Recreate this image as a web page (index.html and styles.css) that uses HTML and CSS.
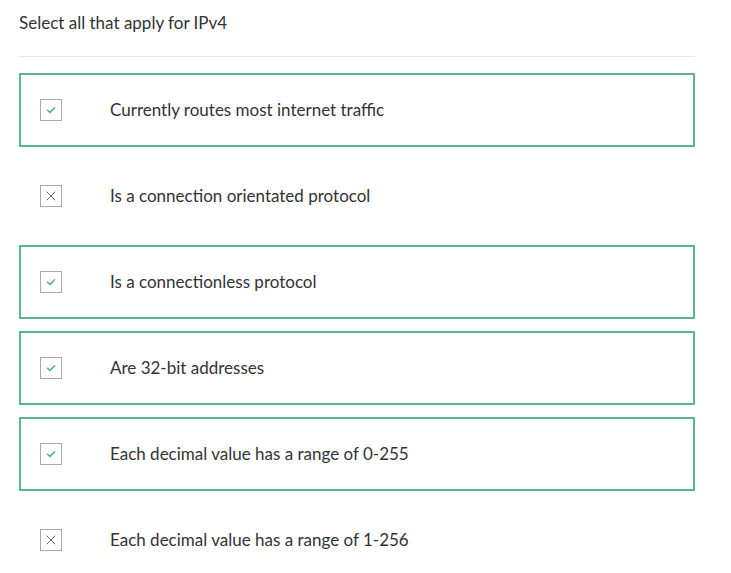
FILE: index.html
```html
<!DOCTYPE html>
<html lang="en">

<head>
    <meta charset="UTF-8">
    <meta name="viewport" content="width=device-width, initial-scale=1.0">
    <title>IPv4</title>

    <link rel="stylesheet" href="styles.css">
</head>

<body>
    <div id="quiz">
        <h2 class="pergunta">Select all that apply for IPv4</h2>

        <div class="opcoes">
            <div class="opcao certa">
                <span class="caixa"><svg width="10" height="8" viewBox="0 0 10 8"><path d="M1.5 4.2 L4 6.4 L8.6 1.8" /></svg></span>
                <span class="texto">Currently routes most internet traffic</span>
            </div>

            <div class="opcao">
                <span class="caixa"><svg class="xis" width="10" height="10" viewBox="0 0 10 10"><path d="M1 1 L9 9 M9 1 L1 9" /></svg></span>
                <span class="texto">Is a connection orientated protocol</span>
            </div>

            <div class="opcao certa">
                <span class="caixa"><svg width="10" height="8" viewBox="0 0 10 8"><path d="M1.5 4.2 L4 6.4 L8.6 1.8" /></svg></span>
                <span class="texto">Is a connectionless protocol</span>
            </div>

            <div class="opcao certa">
                <span class="caixa"><svg width="10" height="8" viewBox="0 0 10 8"><path d="M1.5 4.2 L4 6.4 L8.6 1.8" /></svg></span>
                <span class="texto">Are 32-bit addresses</span>
            </div>

            <div class="opcao certa">
                <span class="caixa"><svg width="10" height="8" viewBox="0 0 10 8"><path d="M1.5 4.2 L4 6.4 L8.6 1.8" /></svg></span>
                <span class="texto">Each decimal value has a range of 0-255</span>
            </div>

            <div class="opcao">
                <span class="caixa"><svg class="xis" width="10" height="10" viewBox="0 0 10 10"><path d="M1 1 L9 9 M9 1 L1 9" /></svg></span>
                <span class="texto">Each decimal value has a range of 1-256</span>
            </div>
        </div>
    </div>
</body>

</html>
```

FILE: styles.css
```css
* {
    padding: 0;
    margin: 0;
    box-sizing: border-box;
}

body {
    background-color: white;
    font-family: Lato, 'Open Sans', sans-serif;
    color: #333;
}

#quiz {
    width: 695px;
    padding: 12px 0 0 19px;
}

.pergunta {
    font-size: 17px;
    font-weight: normal;
    line-height: 22px;
    padding-bottom: 22px;
    border-bottom: 1px solid #e8e8e8;
}

.opcoes {
    padding-top: 16px;
}

.opcao {
    height: 74px;
    margin-bottom: 12px;
    border: 2px solid transparent;
    display: flex;
    align-items: center;
    padding-left: 19px;
}

.opcao.certa {
    border-color: #5ab495;
}

.caixa {
    width: 22px;
    height: 22px;
    border: 1px solid #aaa;
    display: flex;
    justify-content: center;
    align-items: center;
    margin-right: 48px;
}

.caixa svg path {
    fill: none;
    stroke: #4fb38f;
    stroke-width: 1.5;
    stroke-linecap: round;
}

.caixa svg.xis path {
    stroke: #666;
    stroke-width: 1;
}

.texto {
    font-size: 17px;
    line-height: 20px;
}
```
